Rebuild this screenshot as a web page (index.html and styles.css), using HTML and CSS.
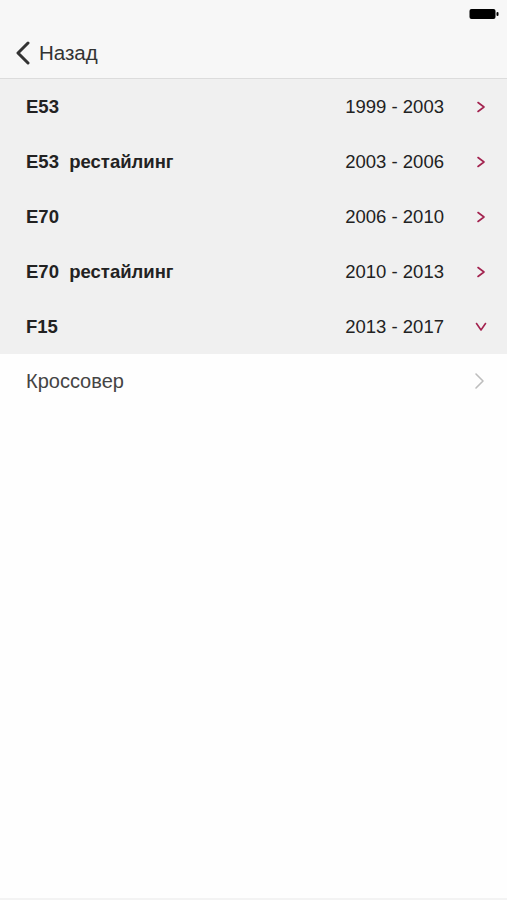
FILE: index.html
```html
<!DOCTYPE html>
<html lang="ru">
<head>
  <meta charset="UTF-8" />
  <meta name="viewport" content="width=device-width, initial-scale=1" />
  <title>Модели</title>
  <link rel="stylesheet" href="styles.css">
</head>
<body>
  <div class="screen">
    <div class="top-bar">
      <div class="status">
        <svg class="battery" width="30" height="12" viewBox="0 0 30 12">
          <rect x="0.5" y="1" width="26" height="10" rx="2" fill="#000" />
          <rect x="27.5" y="4" width="2" height="4" rx="1" fill="#000" />
        </svg>
      </div>
      <div class="nav">
        <a class="back" href="#">
          <svg width="16" height="24" viewBox="0 0 16 24">
            <polyline points="13,2 3,12 13,22" fill="none" stroke="#333" stroke-width="3" stroke-linecap="round" stroke-linejoin="round" />
          </svg>
          <span>Назад</span>
        </a>
      </div>
    </div>

    <ul class="list">
      <li class="row gen">
        <span class="name">E53</span>
        <span class="years">1999 - 2003</span>
        <svg class="arrow" width="12" height="14" viewBox="0 0 12 14"><polyline points="3,2.5 9,7 3,11.5" fill="none" stroke="#a3234f" stroke-width="1.6" stroke-linecap="round" stroke-linejoin="round" /></svg>
      </li>
      <li class="row gen">
        <span class="name">E53&nbsp; рестайлинг</span>
        <span class="years">2003 - 2006</span>
        <svg class="arrow" width="12" height="14" viewBox="0 0 12 14"><polyline points="3,2.5 9,7 3,11.5" fill="none" stroke="#a3234f" stroke-width="1.6" stroke-linecap="round" stroke-linejoin="round" /></svg>
      </li>
      <li class="row gen">
        <span class="name">E70</span>
        <span class="years">2006 - 2010</span>
        <svg class="arrow" width="12" height="14" viewBox="0 0 12 14"><polyline points="3,2.5 9,7 3,11.5" fill="none" stroke="#a3234f" stroke-width="1.6" stroke-linecap="round" stroke-linejoin="round" /></svg>
      </li>
      <li class="row gen">
        <span class="name">E70&nbsp; рестайлинг</span>
        <span class="years">2010 - 2013</span>
        <svg class="arrow" width="12" height="14" viewBox="0 0 12 14"><polyline points="3,2.5 9,7 3,11.5" fill="none" stroke="#a3234f" stroke-width="1.6" stroke-linecap="round" stroke-linejoin="round" /></svg>
      </li>
      <li class="row gen">
        <span class="name">F15</span>
        <span class="years">2013 - 2017</span>
        <svg class="arrow" width="12" height="14" viewBox="0 0 12 14"><polyline points="1.5,3.5 6,10 10.5,3.5" fill="none" stroke="#a3234f" stroke-width="1.6" stroke-linecap="round" stroke-linejoin="round" /></svg>
      </li>
      <li class="row body-type">
        <span class="name">Кроссовер</span>
        <svg class="arrow" width="12" height="18" viewBox="0 0 12 18"><polyline points="3,2 10,9 3,16" fill="none" stroke="#bdbdbd" stroke-width="1.6" stroke-linecap="round" stroke-linejoin="round" /></svg>
      </li>
    </ul>
  </div>
</body>
</html>
```

FILE: styles.css
```css
* {
  box-sizing: border-box;
}
body {
  margin: 0;
  font-family: "Liberation Sans", Arial, sans-serif;
  background: #fefefe;
  color: #222;
}
.screen {
  min-height: 900px;
  border-bottom: 2px solid #f3f3f3;
}

/* Top bar */
.top-bar {
  background: #f7f7f7;
  border-bottom: 1px solid #dcdcdc;
  height: 79px;
}
.status {
  height: 28px;
  display: flex;
  justify-content: flex-end;
  align-items: center;
  padding-right: 8px;
}
.nav {
  height: 50px;
  display: flex;
  align-items: center;
  padding-left: 15px;
}
.back {
  display: flex;
  align-items: center;
  gap: 8px;
  text-decoration: none;
  color: #333;
  font-size: 20.5px;
}

/* List */
.list {
  list-style: none;
  margin: 0;
  padding: 0;
}
.row {
  display: flex;
  align-items: center;
  height: 55px;
  padding: 0 20px 0 26px;
}
.row .name {
  flex: 1;
}
.gen {
  background: #f0f0f0;
  font-size: 18.5px;
}
.gen .name {
  font-weight: bold;
  color: #222;
}
.gen .years {
  color: #222;
  margin-right: 31px;
}
.body-type {
  background: #fefefe;
  height: 54px;
  font-size: 20px;
  color: #444;
}
.body-type .arrow {
  margin-right: 2px;
}
```
